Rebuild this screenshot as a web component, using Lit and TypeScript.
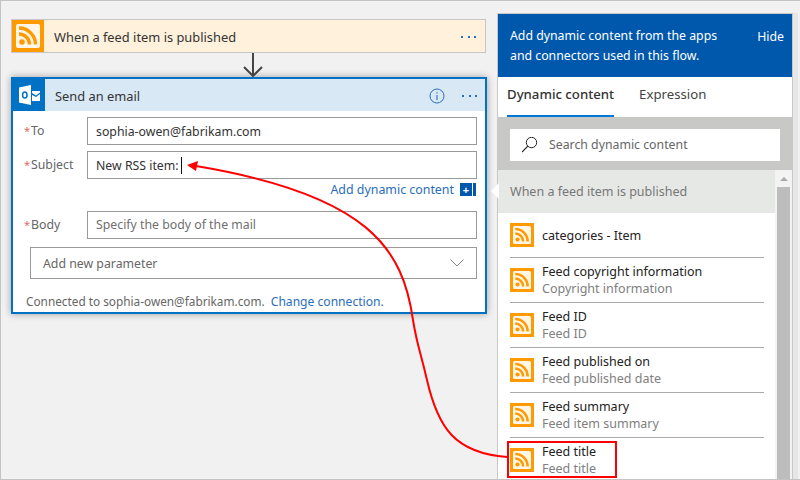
import { LitElement, html, css, svg } from "lit";
import { customElement } from "lit/decorators.js";

const rssGlyph = (size: number) => html`
  <svg class="rss" width=${size} height=${size} viewBox="0 0 32 32">
    <rect width="32" height="32" fill="#ff9a00" />
    <rect x="4" y="4" width="24" height="24" rx="2" fill="#fff6e8" />
    <circle cx="10" cy="22" r="2.8" fill="#ff9a00" />
    ${svg`<path d="M7 14.5a10.5 10.5 0 0 1 10.5 10.5M7 8.5a16.5 16.5 0 0 1 16.5 16.5" transform="translate(0 -.5)" fill="none" stroke="#ff9a00" stroke-width="3.4" />`}
  </svg>
`;

const dots = html`<span class="dots"><i></i><i></i><i></i></span>`;

const feedItems = [
  { title: "categories - Item", sub: "" },
  { title: "Feed copyright information", sub: "Copyright information" },
  { title: "Feed ID", sub: "Feed ID" },
  { title: "Feed published on", sub: "Feed published date" },
  { title: "Feed summary", sub: "Feed item summary" },
  { title: "Feed title", sub: "Feed title", marked: true },
];

@customElement("app-root")
export class AppRoot extends LitElement {
  static styles = css`
    :host {
      display: block;
      width: 800px;
      height: 480px;
      font-family: "Noto Sans", "Open Sans", sans-serif;
      font-size: 12.3px;
      color: #333;
    }
    .page {
      position: relative;
      display: flex;
      box-sizing: border-box;
      width: 800px;
      height: 480px;
      padding: 12px 0 0 10px;
      overflow: hidden;
      background: #f1f1f1;
      border-top: 1px solid #c4c4c4;
      border-left: 1px solid #c4c4c4;
      border-bottom: 1px solid #c4c4c4;
    }
    .flow {
      width: 476px;
      margin-top: 6px;
    }
    .trigger {
      display: flex;
      align-items: center;
      box-sizing: border-box;
      height: 34px;
      width: 475px;
      background: #fff1dc;
      border: 1px solid #c8c6c4;
    }
    .title {
      flex: 1;
      padding-top: 2px;
      font-size: 12.85px;
    }
    .trigger .title {
      margin-left: 10px;
    }
    .rss {
      display: block;
      flex: none;
    }
    .dots {
      display: flex;
      gap: 4.5px;
      margin: 1px 9px 0 0;
    }
    .dots i {
      width: 2px;
      height: 2px;
      background: #2a6ebb;
    }
    .connector {
      display: block;
      margin-left: 230px;
    }
    .action {
      box-sizing: border-box;
      height: 237px;
      border: 2px solid #0072c6;
      background: #fff;
      box-shadow: 0 0 7px rgba(0, 0, 0, 0.35);
    }
    .action-head {
      display: flex;
      align-items: center;
      height: 32px;
      background: #d8e8f5;
    }
    .outlook {
      display: flex;
      align-items: center;
      justify-content: center;
      width: 32px;
      height: 32px;
      margin-right: 10px;
      background: #0072c6;
    }
    .info {
      margin: 1px 17px 0 0;
    }
    .action-head .dots {
      margin-right: 8px;
    }
    .fields {
      display: flex;
      flex-direction: column;
      padding: 6px 8px 0 0;
    }
    .row {
      display: flex;
      margin-bottom: 6px;
    }
    .label {
      width: 74px;
      padding: 5px 0 0 11px;
      box-sizing: border-box;
      color: #666;
    }
    .label b {
      display: inline-block;
      width: 7px;
      font-size: 11px;
      font-weight: 400;
      color: #e06a6a;
    }
    .input {
      flex: 1;
      display: flex;
      align-items: center;
      box-sizing: border-box;
      height: 28px;
      padding-left: 8px;
      background: #fff;
      border: 1px solid #999;
      color: #333;
    }
    .input.empty {
      padding-bottom: 1px;
      color: #6f6f6f;
    }
    .caret {
      width: 1px;
      height: 17px;
      margin-left: 2px;
      background: #111;
    }
    .add {
      display: flex;
      justify-content: flex-end;
      align-items: center;
      box-sizing: border-box;
      height: 26px;
      margin-top: -6px;
      margin-bottom: 6px;
      padding: 1px 1px 6px 0;
      font-size: 12.4px;
      color: #2a6ebb;
    }
    .plus {
      display: flex;
      align-items: center;
      justify-content: center;
      width: 12px;
      height: 13px;
      margin-left: 6px;
      background: #0058ad;
      color: #fff;
      font-size: 11px;
      font-weight: 700;
      line-height: 1;
    }
    .plus-bar {
      width: 3px;
      height: 13px;
      margin-left: 1px;
      background: #0058ad;
    }
    .param {
      display: flex;
      align-items: center;
      justify-content: space-between;
      box-sizing: border-box;
      height: 32px;
      margin: 2px 0 0 17px;
      padding: 0 12px;
      border: 1px solid #999;
      color: #666;
    }
    .conn {
      margin: 13px 0 0 13px;
      font-size: 11.8px;
      line-height: 18px;
      color: #666;
    }
    .conn a {
      margin-left: 3px;
      font-size: 12.1px;
      color: #2a6ebb;
    }
    .panel {
      display: flex;
      flex-direction: column;
      box-sizing: border-box;
      width: 296px;
      height: 467px;
      margin-left: 10px;
      background: #fff;
      border: 1px solid #c8c8c8;
      box-shadow: 5px 0 0 #e6e6e6;
    }
    .banner {
      display: flex;
      justify-content: space-between;
      box-sizing: border-box;
      height: 63px;
      padding: 12px 8px 0 12px;
      background: #0058ad;
      color: #fff;
      line-height: 20px;
    }
    .banner .hide {
      padding-top: 1px;
    }
    .tabs {
      display: flex;
      gap: 25px;
      height: 40px;
      padding-left: 9px;
    }
    .tab {
      box-sizing: border-box;
      height: 40px;
      padding-top: 8px;
      color: #444;
      font-size: 13.2px;
    }
    .tab.on {
      border-bottom: 2px solid #0078d4;
      color: #333;
      font-weight: 500;
    }
    .search-band {
      height: 53px;
      padding: 12px;
      box-sizing: border-box;
      background: #c8c9c6;
    }
    .search {
      display: flex;
      align-items: center;
      gap: 11px;
      box-sizing: border-box;
      height: 32px;
      padding: 0 0 1px 12px;
      background: #fff;
      color: #666;
    }
    .body {
      flex: 1;
      display: flex;
      min-height: 0;
    }
    .list {
      flex: 1;
      min-width: 0;
      font-size: 12.5px;
    }
    .section {
      display: flex;
      align-items: center;
      height: 43px;
      padding-left: 12px;
      background: #e6e8e6;
      color: #777;
    }
    .item {
      position: relative;
      display: flex;
      align-items: center;
      gap: 8px;
      box-sizing: border-box;
      height: 45px;
      margin: 0 11px 0 12px;
      border-bottom: 1px solid #aaa;
    }
    .item:first-of-type {
      height: 44px;
    }
    .item:last-child {
      border-bottom-color: transparent;
    }
    .item-title {
      color: #222;
      line-height: 17px;
    }
    .item-sub {
      color: #808080;
      line-height: 17px;
    }
    .mark {
      position: absolute;
      left: -3px;
      top: 3px;
      width: 110px;
      height: 37px;
      box-sizing: border-box;
      border: 2px solid #f00;
    }
    .scroll {
      display: flex;
      flex-direction: column;
      align-items: center;
      width: 13px;
      padding: 0 2px;
      background: #f3f3f3;
    }
    .scroll-up {
      width: 0;
      height: 0;
      margin: 7px 0 6px;
      border: 4px solid transparent;
      border-top: 0;
      border-bottom: 4px solid #aaa;
    }
    .scroll-thumb {
      flex: 1;
      width: 100%;
      background: #bdbdbd;
    }
    .notch {
      position: absolute;
      left: 490px;
      top: 182px;
      width: 0;
      height: 0;
      border: 8px solid transparent;
      border-left: 0;
      border-right: 8px solid #fff;
    }
    .overlay {
      position: absolute;
      left: -1px;
      top: -1px;
      pointer-events: none;
    }
  `;

  render() {
    return html`
      <div class="page">
        <div class="flow">
          <div class="trigger">
            ${rssGlyph(32)}
            <span class="title">When a feed item is published</span>
            ${dots}
          </div>
          <svg class="connector" width="24" height="24" viewBox="0 0 24 24">
            <path d="M12 0V23M3 14l9 9 9-9" fill="none" stroke="#444" stroke-width="2" />
          </svg>
          <div class="action">
            <div class="action-head">
              <span class="outlook">
                <svg width="22" height="22" viewBox="0 0 22 22">
                  <path d="M1 3.5 13 1v20L1 18.5z" fill="#fff" />
                  <path d="M14 7h8v1.5l-4 3-4-2.5zM14 11l4 2 4-3v7h-8z" fill="#fff" />
                  <ellipse cx="6.8" cy="11" rx="2.2" ry="3" fill="none" stroke="#0072c6" stroke-width="1.5" />
                </svg>
              </span>
              <span class="title">Send an email</span>
              <svg class="info" width="16" height="16" viewBox="0 0 16 16">
                <circle cx="8" cy="8" r="7" fill="none" stroke="#2a6ebb" stroke-width="1" />
                <path d="M8 7v5M8 4.2v1.3" stroke="#2a6ebb" stroke-width="1.1" />
              </svg>
              ${dots}
            </div>
            <div class="fields">
              <div class="row">
                <div class="label"><b>*</b>To</div>
                <div class="input">sophia-owen@fabrikam.com</div>
              </div>
              <div class="row">
                <div class="label"><b>*</b>Subject</div>
                <div class="input">New RSS item:<span class="caret"></span></div>
              </div>
              <div class="add">
                Add dynamic content<span class="plus">+</span><span class="plus-bar"></span>
              </div>
              <div class="row">
                <div class="label"><b>*</b>Body</div>
                <div class="input empty">Specify the body of the mail</div>
              </div>
              <div class="param">
                Add new parameter
                <svg width="14" height="8" viewBox="0 0 14 8">
                  <path d="M.5.5 7 7 13.5.5" fill="none" stroke="#888" stroke-width="1" />
                </svg>
              </div>
              <div class="conn">
                Connected to sophia-owen@fabrikam.com. <a>Change connection.</a>
              </div>
            </div>
          </div>
        </div>
        <div class="panel">
          <div class="banner">
            <span>Add dynamic content from the apps<br />and connectors used in this flow.</span>
            <span class="hide">Hide</span>
          </div>
          <div class="tabs">
            <div class="tab on">Dynamic content</div>
            <div class="tab">Expression</div>
          </div>
          <div class="search-band">
            <div class="search">
              <svg width="16" height="16" viewBox="0 0 16 16">
                <circle cx="9.5" cy="5.5" r="5.2" fill="none" stroke="#222" stroke-width="1" />
                <path d="M5.8 9.2 0 15" stroke="#222" stroke-width="1.2" />
              </svg>
              Search dynamic content
            </div>
          </div>
          <div class="body">
            <div class="list">
              <div class="section">When a feed item is published</div>
              ${feedItems.map(
                (item) => html`
                  <div class="item">
                    ${rssGlyph(24)}
                    <div>
                      <div class="item-title">${item.title}</div>
                      ${item.sub ? html`<div class="item-sub">${item.sub}</div>` : null}
                    </div>
                    ${item.marked ? html`<div class="mark"></div>` : null}
                  </div>
                `
              )}
            </div>
            <div class="scroll">
              <span class="scroll-up"></span>
              <span class="scroll-thumb"></span>
            </div>
          </div>
        </div>
        <div class="notch"></div>
        <svg class="overlay" width="800" height="480" viewBox="0 0 800 480">
          <path
            d="M507 457C455 453 438 428 427 380 420 350 417 345 413 320 403 250 370 195 196 166"
            fill="none"
            stroke="#f00"
            stroke-width="2"
          />
          <path d="M187 165 198 161 196 171z" fill="#f00" />
        </svg>
      </div>
    `;
  }
}
